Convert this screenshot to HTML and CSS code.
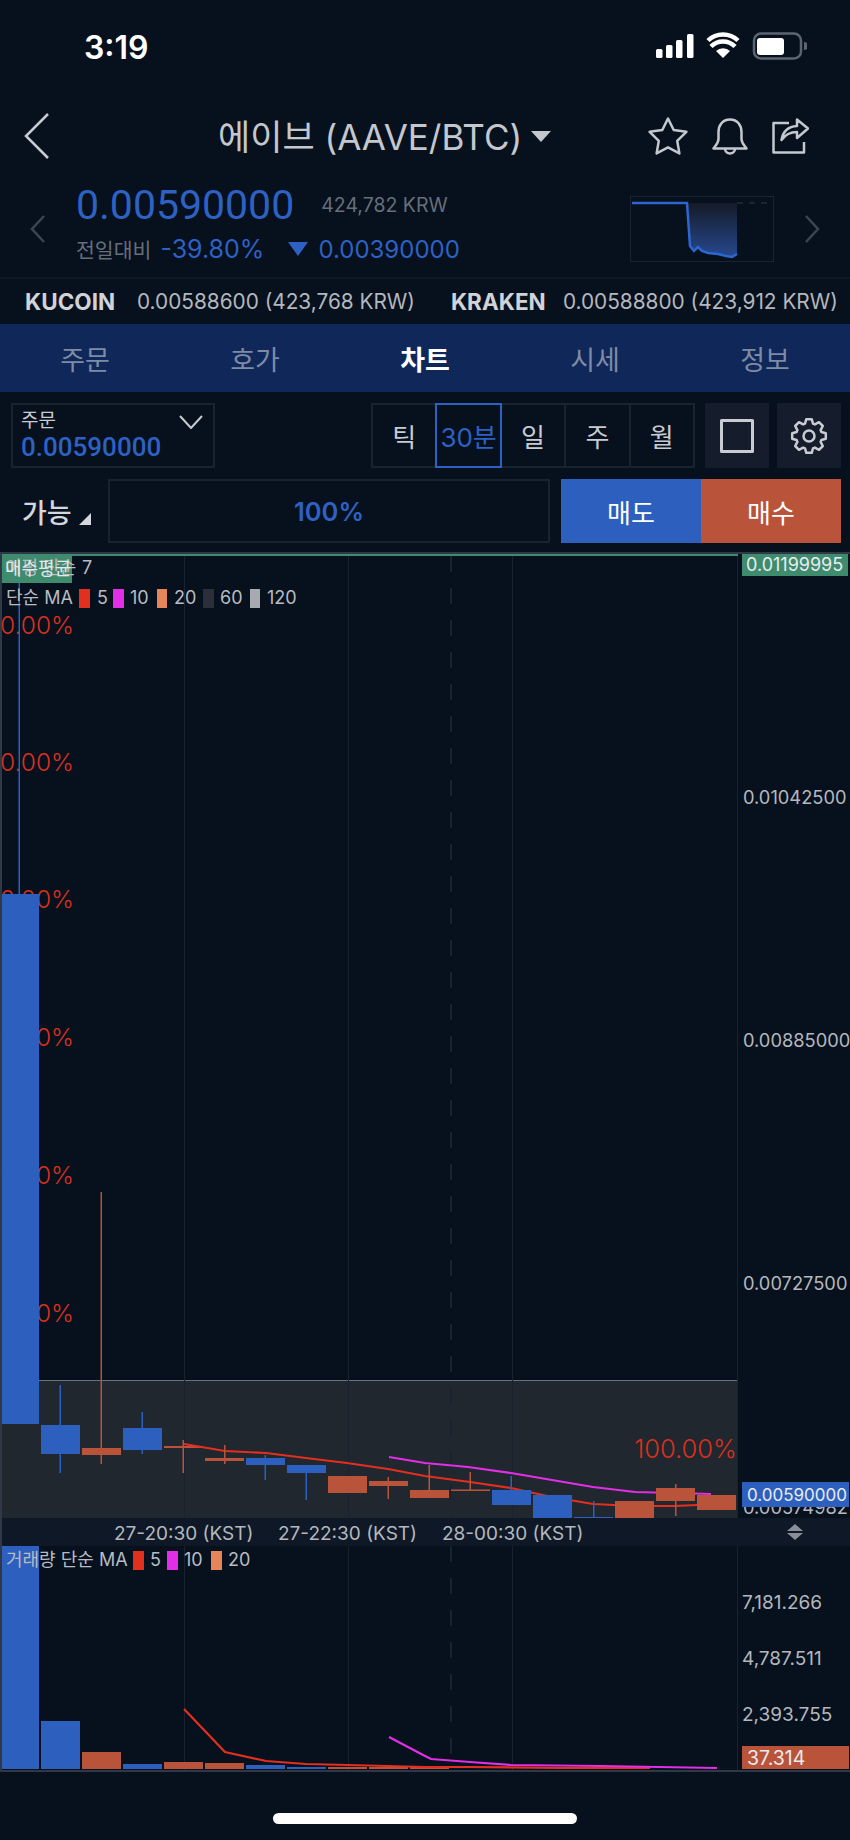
FILE: index.html
```html
<!DOCTYPE html>
<html lang="ko">
<head>
	<meta charset="UTF-8" />
	<meta name="viewport" content="width=device-width, initial-scale=1.0" />
	<title>에이브 (AAVE/BTC) 차트</title>
	<link rel="stylesheet" href="styles.css">
</head>
<body>
	<div class="status">
		<span class="clock">3:19</span>
		<svg class="status-icons" width="151" height="30" viewBox="0 0 151 30">
			<rect class="white" x="0" y="17" width="6.5" height="9" rx="1.5" />
			<rect class="white" x="10" y="13" width="6.5" height="13" rx="1.5" />
			<rect class="white" x="20" y="8" width="6.5" height="18" rx="1.5" />
			<rect class="white" x="31" y="2" width="6.5" height="24" rx="1.5" />
			<path class="white" d="M67 26 L60 19 A10 10 0 0 1 74 19 Z" />
			<path class="wifi-arc" d="M55 14.5 A17 17 0 0 1 79 14.5" />
			<path class="wifi-arc" d="M52 8.5 A21.500 21.500 0 0 1 82 8.5" />
			<rect class="batt-frame" x="98" y="1.500" width="47" height="25" rx="7" />
			<rect class="white" x="101" y="6" width="27" height="17" rx="3" />
			<path class="batt-nub" d="M148 10 A4 4 0 0 1 148 18 Z" />
		</svg>
	</div>

	<div class="nav">
		<svg class="back" width="26" height="46" viewBox="0 0 26 46"><path d="M24 1 L2 23 L24 45" /></svg>
		<h1 class="title">에이브 (AAVE/BTC)</h1>
		<span class="title-caret"></span>
		<div class="nav-icons">
			<svg width="40" height="38" viewBox="0 0 40 38"><path d="M20 1.500 L25.700 13 L38.400 14.800 L29.200 23.800 L31.400 36.400 L20 30.400 L8.600 36.400 L10.800 23.800 L1.600 14.800 L14.300 13 Z" /></svg>
			<svg width="36" height="37" viewBox="0 0 36 37"><path d="M18 1.500 C10 1.500 6.500 8 6.500 14 V21 C6.500 25 4 27 1.500 30.500 H34.500 C32 27 29.500 25 29.500 21 V14 C29.500 8 26 1.500 18 1.500 Z M13 30.500 A5 5 0 0 0 23 30.500" /></svg>
			<svg width="37" height="36" viewBox="0 0 37 36"><path d="M17 5 H1.500 V34.500 H32 V24 M9.500 22 C11 13 17 8.500 25 8 V1.500 L36 10.500 L25 20 V14 C18 14 13 17 9.500 22 Z" /></svg>
		</div>
	</div>

	<div class="quote">
		<svg class="side-arrow" width="16" height="28" viewBox="0 0 16 28"><path d="M14 1 L2 14 L14 27" /></svg>
		<div class="quote-info">
			<div class="quote-top">
				<span class="price">0.00590000</span>
				<span class="krw">424,782 KRW</span>
			</div>
			<div class="quote-bottom">
				<span class="prev">전일대비</span>
				<span class="pct">-39.80%</span>
				<span class="down-tri"></span>
				<span class="diff">0.00390000</span>
			</div>
		</div>
		<svg class="spark" width="144" height="66" viewBox="0 0 144 66">
			<defs>
				<linearGradient id="sparkFill" x1="0" y1="0" x2="0" y2="1">
					<stop offset="0" stop-color="#151b28" />
					<stop offset="1" stop-color="#26498f" />
				</linearGradient>
			</defs>
			<rect class="spark-frame" x="0.500" y="0.500" width="143" height="65" />
			<path fill="url(#sparkFill)" d="M57 7 L60 50 L64 55 L68 51 L72 55 L78 57 L88 58 L96 60 L102 61 L107 58 V7 Z" />
			<path class="spark-dash" d="M107 7 H140" />
			<path class="spark-line" d="M2 7 H57 L60 50 L64 55 L68 51 L72 55 L78 57 L88 58 L96 60 L102 61 L107 58" />
		</svg>
		<svg class="side-arrow next" width="16" height="28" viewBox="0 0 16 28"><path d="M2 1 L14 14 L2 27" /></svg>
	</div>

	<div class="tickers">
		<b class="ex">KUCOIN</b>
		<span class="ex-price">0.00588600 (423,768 KRW)</span>
		<b class="ex ex-second">KRAKEN</b>
		<span class="ex-price">0.00588800 (423,912 KRW)</span>
	</div>

	<div class="tabs">
		<div class="tab">주문</div>
		<div class="tab">호가</div>
		<div class="tab active">차트</div>
		<div class="tab">시세</div>
		<div class="tab">정보</div>
	</div>

	<div class="controls">
		<div class="order-box">
			<span class="order-label">주문</span>
			<span class="order-price">0.00590000</span>
			<svg class="order-caret" width="24" height="14" viewBox="0 0 24 14"><path d="M1 1 L12 13 L23 1" /></svg>
		</div>
		<div class="periods">
			<div class="period">틱</div>
			<div class="period active">30분</div>
			<div class="period">일</div>
			<div class="period">주</div>
			<div class="period">월</div>
		</div>
		<div class="tool">
			<svg width="34" height="34" viewBox="0 0 34 34"><rect x="1.500" y="1.500" width="31" height="31" /></svg>
		</div>
		<div class="tool">
			<svg width="38" height="38" viewBox="-19 -19 38 38">
				<path d="M-4 -12.400 L-2.700 -16.800 L2.700 -16.800 L4 -12.400 L5.900 -11.600 L10 -13.800 L13.800 -10 L11.600 -5.900 L12.400 -4 L16.800 -2.700 L16.800 2.700 L12.400 4 L11.600 5.900 L13.800 10 L10 13.800 L5.900 11.600 L4 12.400 L2.700 16.800 L-2.700 16.800 L-4 12.400 L-5.900 11.600 L-10 13.800 L-13.800 10 L-11.600 5.900 L-12.400 4 L-16.800 2.700 L-16.800 -2.700 L-12.400 -4 L-11.600 -5.900 L-13.800 -10 L-10 -13.800 L-5.900 -11.600 Z" />
				<circle r="5.500" />
			</svg>
		</div>
	</div>

	<div class="actions">
		<div class="avail">가능<span class="avail-tri"></span></div>
		<div class="ratio">100%</div>
		<div class="btn sell">매도</div>
		<div class="btn buy">매수</div>
	</div>

	<svg class="chart" width="850" height="1220" viewBox="0 552 850 1220">
		<!-- frame -->
		<rect class="edge" x="0" y="552" width="2" height="1220" />
		<rect class="edge" x="0" y="552" width="850" height="2" />
		<rect class="edge" x="0" y="1770" width="850" height="2" />
		<rect class="green" x="2" y="554" width="736" height="2" />

		<!-- position zone and time axis -->
		<rect class="zone" x="2" y="1380" width="736" height="138" />
		<rect class="zone-top" x="39" y="1380" width="699" height="1" />
		<rect class="axis-bar" x="2" y="1518" width="848" height="28" />

		<!-- grid -->
		<path class="grid" d="M184.500 556 V1518 M184.500 1546 V1770 M348.500 556 V1518 M348.500 1546 V1770 M512.500 556 V1518 M512.500 1546 V1770 M737.500 556 V1518 M737.500 1546 V1770" />
		<path class="grid-dash" d="M451 556 V1518 M451 1546 V1770" />

		<!-- percent labels, sit behind the first candle -->
		<text class="pct-label" x="74" y="634" text-anchor="end">0.00%</text>
		<text class="pct-label" x="74" y="771" text-anchor="end">0.00%</text>
		<text class="pct-label" x="74" y="908" text-anchor="end">0.00%</text>
		<text class="pct-label" x="74" y="1046" text-anchor="end">0.00%</text>
		<text class="pct-label" x="74" y="1184" text-anchor="end">0.00%</text>
		<text class="pct-label" x="74" y="1322" text-anchor="end">0.00%</text>
		<text class="pct-label wide" x="737" y="1458" text-anchor="end">100.00%</text>

		<!-- candles under the MA lines -->
		<rect class="up" x="164" y="1446" width="39" height="2" />
		<rect class="up" x="182.500" y="1440" width="1.500" height="33" />

		<!-- moving averages -->
		<polyline class="ma5" points="184,1444 225,1451 266,1453 306,1458 347,1463 388,1469 425,1476 470,1482 511,1488 552,1497 593,1504 635,1506 675,1506 697,1505" />
		<polyline class="ma10" points="389,1457 425,1463 468,1467 511,1473 552,1480 593,1487 635,1492 675,1493 711,1494" />

		<!-- candles -->
		<rect class="dn" x="18.500" y="556" width="1.500" height="338" />
		<rect class="dn" x="2" y="894" width="37" height="530" />
		<rect class="dn" x="59.500" y="1385" width="1.500" height="88" />
		<rect class="dn" x="41" y="1425" width="39" height="29" />
		<rect class="up" x="100.500" y="1192" width="1.500" height="272" />
		<rect class="up" x="82" y="1448" width="39" height="7" />
		<rect class="dn" x="141.500" y="1412" width="1.500" height="42" />
		<rect class="dn" x="123" y="1428" width="39" height="22" />
		<rect class="up" x="224" y="1445" width="1.500" height="19" />
		<rect class="up" x="205" y="1458" width="39" height="3" />
		<rect class="dn" x="264.500" y="1455" width="1.500" height="25" />
		<rect class="dn" x="246" y="1458" width="39" height="7" />
		<rect class="dn" x="305.500" y="1465" width="1.500" height="35" />
		<rect class="dn" x="287" y="1465" width="39" height="8" />
		<rect class="up" x="328" y="1476" width="39" height="17" />
		<rect class="up" x="387.500" y="1477" width="1.500" height="22" />
		<rect class="up" x="369" y="1481" width="39" height="5" />
		<rect class="up" x="428.500" y="1465" width="1.500" height="25" />
		<rect class="up" x="410" y="1490" width="39" height="8" />
		<rect class="up" x="469.500" y="1472" width="1.500" height="18" />
		<rect class="up" x="451" y="1489.500" width="39" height="1.500" />
		<rect class="dn" x="510.500" y="1476" width="1.500" height="14" />
		<rect class="dn" x="492" y="1490" width="39" height="15" />
		<rect class="dn" x="533" y="1495" width="39" height="23" />
		<rect class="dn" x="593" y="1501" width="1.500" height="17" />
		<rect class="dn" x="574" y="1517" width="39" height="1" />
		<rect class="up" x="615" y="1501" width="39" height="17" />
		<rect class="up" x="675" y="1484" width="1.500" height="32" />
		<rect class="up" x="656" y="1488" width="39" height="13" />
		<rect class="up" x="697" y="1495" width="39" height="15" />

		<!-- main pane legend -->
		<rect class="green" x="2" y="556" width="70" height="27" />
		<text class="legend" x="5" y="574">이평 단순</text>
		<text class="legend" x="82" y="574">7</text>
		<text class="legend bright" x="5" y="575">매수평균</text>
		<text class="legend" x="6" y="604">단순 MA</text>
		<rect class="sw5" x="79" y="589" width="11" height="19" />
		<text class="legend" x="97" y="604">5</text>
		<rect class="sw10" x="113" y="589" width="11" height="19" />
		<text class="legend" x="130" y="604">10</text>
		<rect class="sw20" x="157" y="589" width="10" height="19" />
		<text class="legend" x="174" y="604">20</text>
		<rect class="sw60" x="203" y="589" width="11" height="19" />
		<text class="legend" x="220" y="604">60</text>
		<rect class="sw120" x="250" y="589" width="10" height="19" />
		<text class="legend" x="267" y="604">120</text>

		<!-- price axis -->
		<rect class="green" x="742" y="554" width="106" height="22" />
		<text class="tag-text top" x="746" y="571">0.01199995</text>
		<text class="axis" x="743" y="804">0.01042500</text>
		<text class="axis" x="743" y="1047">0.00885000</text>
		<text class="axis" x="743" y="1290">0.00727500</text>
		<text class="axis" x="743" y="1514">0.00574982</text>
		<rect class="dn" x="742" y="1482" width="107" height="25" />
		<text class="tag-text" x="747" y="1501">0.00590000</text>
		<rect class="axis-cover" x="738" y="1518" width="112" height="28" />
		<path class="scale-icon" d="M795 1524 L803 1531 H787 Z M787 1533 H803 L795 1540 Z" />

		<!-- time axis -->
		<text class="axis time" x="114" y="1540">27-20:30 (KST)</text>
		<text class="axis time" x="278" y="1540">27-22:30 (KST)</text>
		<text class="axis time" x="442" y="1540">28-00:30 (KST)</text>

		<!-- volume pane -->
		<rect class="dn" x="2" y="1546" width="37" height="223" />
		<rect class="dn" x="41" y="1721" width="39" height="48" />
		<rect class="up" x="82" y="1752" width="39" height="17" />
		<rect class="dn" x="123" y="1764" width="39" height="5" />
		<rect class="up" x="164" y="1762" width="39" height="7" />
		<rect class="up" x="205" y="1763" width="39" height="6" />
		<rect class="dn" x="246" y="1765" width="39" height="4" />
		<rect class="dn" x="287" y="1767" width="39" height="2" />
		<rect class="up" x="328" y="1767" width="39" height="2" />
		<rect class="up" x="369" y="1767" width="39" height="2" />
		<rect class="up" x="410" y="1767" width="39" height="2" />
		<polyline class="ma5" points="184,1709 225,1752 266,1761 306,1764 347,1765 388,1766 425,1767 470,1767 560,1768 650,1768" />
		<polyline class="ma10" points="389,1737 425,1756 431,1759 470,1762 511,1765 600,1766 717,1768" />

		<text class="legend" x="6" y="1566">거래량 단순 MA</text>
		<rect class="sw5" x="133" y="1551" width="11" height="19" />
		<text class="legend" x="150" y="1566">5</text>
		<rect class="sw10" x="167" y="1551" width="11" height="19" />
		<text class="legend" x="184" y="1566">10</text>
		<rect class="sw20" x="211" y="1551" width="11" height="19" />
		<text class="legend" x="228" y="1566">20</text>

		<text class="axis vol" x="742" y="1609">7,181.266</text>
		<text class="axis vol" x="742" y="1665">4,787.511</text>
		<text class="axis vol" x="742" y="1721">2,393.755</text>
		<rect class="up" x="742" y="1746" width="107" height="23" />
		<text class="tag-text vol" x="747" y="1765">37.314</text>
	</svg>

	<div class="home-bar"></div>
</body>
</html>
```

FILE: styles.css
```css
* {
	box-sizing: border-box;
}
html, body {
	margin: 0;
	background-color: #07101d;
}
body {
	width: 850px;
	height: 1840px;
	overflow: hidden;
	font-family: Inter, "Noto Sans CJK KR", sans-serif;
	color: #c8ccd2;
}

/* status bar */
.status {
	height: 94px;
	padding: 0 43px 0 84px;
	display: flex;
	align-items: center;
	justify-content: space-between;
}
.clock {
	color: white;
	font-size: 32px;
	font-weight: 600;
}
.white {
	fill: white;
}
.wifi-arc {
	fill: none;
	stroke: white;
	stroke-width: 4.5;
}
.batt-frame {
	fill: none;
	stroke: #5c6472;
	stroke-width: 2.5;
}
.batt-nub {
	fill: #5c6472;
}

/* title row */
.nav {
	height: 84px;
	padding: 0 41px 0 24px;
	display: flex;
	align-items: center;
}
.back path {
	fill: none;
	stroke: #c8ccd2;
	stroke-width: 2.5;
}
.title {
	margin: 0 0 4px 168px;
	font-size: 35px;
	font-weight: 400;
	color: #c4c8ce;
	white-space: nowrap;
}
.title-caret {
	margin-left: 9px;
	border-left: 10px solid transparent;
	border-right: 10px solid transparent;
	border-top: 11px solid #c4c8ce;
}
.nav-icons {
	margin-left: auto;
	display: flex;
	align-items: center;
	gap: 24px;
}
.nav-icons path {
	fill: none;
	stroke: #c4c8ce;
	stroke-width: 2.5;
	stroke-linejoin: round;
}

/* price row */
.quote {
	height: 99px;
	padding: 0 30px;
	display: flex;
	align-items: center;
}
.side-arrow {
	margin-top: 2px;
}
.side-arrow path {
	fill: none;
	stroke: #3d4553;
	stroke-width: 2.5;
}
.quote-info {
	margin-left: 30px;
	align-self: flex-start;
}
.quote-top {
	display: flex;
	align-items: center;
	height: 54px;
}
.price {
	font-family: Roboto, sans-serif;
	font-size: 41px;
	color: #2d62c4;
}
.krw {
	margin-left: 27px;
	font-size: 19.5px;
	color: #666e7b;
}
.quote-bottom {
	display: flex;
	align-items: center;
	height: 34px;
}
.prev {
	font-size: 20.5px;
	color: #666e7b;
}
.pct, .diff {
	font-size: 24px;
	color: #2d62c4;
}
.pct {
	margin-left: 9px;
	font-size: 25px;
}
.down-tri {
	margin-left: 24px;
	margin-right: 10px;
	border-left: 10px solid transparent;
	border-right: 10px solid transparent;
	border-top: 14px solid #2d62c4;
}
.spark {
	margin-left: auto;
	margin-right: 30px;
	margin-top: 2px;
}
.spark-frame {
	fill: none;
	stroke: #1b2331;
}
.spark-line {
	fill: none;
	stroke: #2d66d0;
	stroke-width: 2.5;
}
.spark-dash {
	stroke: #232a37;
	stroke-width: 1.5;
	stroke-dasharray: 6 6;
}

/* exchange prices */
.tickers {
	height: 47px;
	padding-left: 25px;
	border-top: 2px solid #101826;
	display: flex;
	align-items: center;
	font-size: 20.8px;
	white-space: nowrap;
	color: #b4b8be;
}
.ex {
	width: 112px;
	font-size: 22.5px;
	color: #d0d3d8;
	font-weight: 700;
}
.ex-second {
	margin-left: 36px;
}

/* tabs */
.tabs {
	height: 68px;
	background-color: #10275a;
	display: flex;
}
.tab {
	flex: 1;
	display: flex;
	align-items: center;
	justify-content: center;
	font-size: 27px;
	color: #7e8ba5;
}
.tab.active {
	color: white;
	font-weight: 700;
}

/* order box and period buttons */
.controls {
	margin-top: 11px;
	height: 65px;
	padding: 0 9px 0 11px;
	display: flex;
}
.order-box {
	width: 204px;
	padding: 3px 8px;
	border: 2px solid #1a2230;
	position: relative;
	display: flex;
	flex-direction: column;
}
.order-label {
	font-size: 19px;
	line-height: 25px;
	color: #c8ccd2;
}
.order-price {
	font-family: Roboto, sans-serif;
	font-size: 26px;
	line-height: 29px;
	font-weight: 500;
	color: #2d62c4;
}
.order-caret {
	position: absolute;
	right: 10px;
	top: 10px;
}
.order-caret path {
	fill: none;
	stroke: #c8ccd2;
	stroke-width: 2;
}
.periods {
	margin-left: 156px;
	width: 324px;
	display: flex;
}
.period {
	flex: 1;
	margin-left: -2px;
	display: flex;
	align-items: center;
	justify-content: center;
	border: 2px solid #1a2230;
	font-size: 26px;
	color: #c8ccd2;
}
.period:first-child {
	margin-left: 0;
}
.period.active {
	position: relative;
	border-color: #2d62c4;
	color: #2d62c4;
	white-space: nowrap;
}
.tool {
	width: 64px;
	margin-left: 8px;
	background-color: #151c2b;
	display: flex;
	align-items: center;
	justify-content: center;
}
.periods + .tool {
	margin-left: 10px;
}
.tool rect, .tool path, .tool circle {
	fill: none;
	stroke: #c8ccd2;
	stroke-width: 2.5;
	stroke-linejoin: round;
}
.tool rect {
	stroke-width: 3;
}

/* order ratio row */
.actions {
	margin-top: 11px;
	height: 64px;
	padding: 0 9px 0 22px;
	display: flex;
}
.avail {
	width: 86px;
	display: flex;
	align-items: center;
	font-size: 27px;
	font-weight: 500;
	color: #d4d7db;
}
.avail-tri {
	margin: 16px 0 0 7px;
	border-left: 12px solid transparent;
	border-bottom: 12px solid #d4d7db;
}
.ratio {
	width: 442px;
	border: 2px solid #1a2230;
	display: flex;
	align-items: center;
	justify-content: center;
	font-size: 25.5px;
	font-weight: 600;
	color: #2d62c4;
}
.btn {
	width: 140px;
	display: flex;
	align-items: center;
	justify-content: center;
	font-size: 26px;
	color: white;
}
.sell {
	margin-left: 11px;
	background-color: #2d60be;
}
.buy {
	background-color: #b9533a;
}

/* chart */
.chart {
	display: block;
	margin-top: 9px;
}
.chart text {
	font-family: Inter, "Noto Sans CJK KR", sans-serif;
}
.edge {
	fill: #2f3847;
}
.green {
	fill: #3f8b6e;
}
.zone {
	fill: #20272e;
}
.zone-top {
	fill: #69727a;
}
.axis-bar, .axis-cover {
	fill: #0f1826;
}
.grid {
	fill: none;
	stroke: #1a2230;
	stroke-width: 1;
}
.grid-dash {
	fill: none;
	stroke: #1a2230;
	stroke-width: 2;
	stroke-dasharray: 16 16;
}
.dn {
	fill: #2d60be;
}
.up {
	fill: #b9533a;
}
.ma5, .ma10 {
	fill: none;
	stroke-width: 2.2;
}
.ma5 {
	stroke: #e32f20;
}
.ma10 {
	stroke: #e22ee6;
}
.sw5 {
	fill: #e32f20;
}
.sw10 {
	fill: #e22ee6;
}
.sw20 {
	fill: #e6855a;
}
.sw60 {
	fill: #2b2f39;
}
.sw120 {
	fill: #a7abb1;
}
.legend {
	font-size: 18px;
	fill: #b8bcc2;
}
.legend.bright {
	fill: #e4e8ea;
}
.pct-label {
	font-size: 24.5px;
	font-weight: 300;
	fill: #d9301f;
}
.pct-label.wide {
	font-size: 25.5px;
}
.axis {
	font-size: 18.3px;
	fill: #b4b8be;
}
.axis.time {
	font-size: 19px;
}
.axis.vol {
	font-size: 19px;
}
.tag-text {
	font-size: 17px;
	fill: #e8ecf0;
}
.tag-text.top {
	font-size: 18px;
}
.tag-text.vol {
	font-size: 19.5px;
}
.scale-icon {
	fill: #8a8f97;
}

.home-bar {
	width: 304px;
	height: 11px;
	margin: 41px 0 0 273px;
	border-radius: 6px;
	background-color: white;
}
```
